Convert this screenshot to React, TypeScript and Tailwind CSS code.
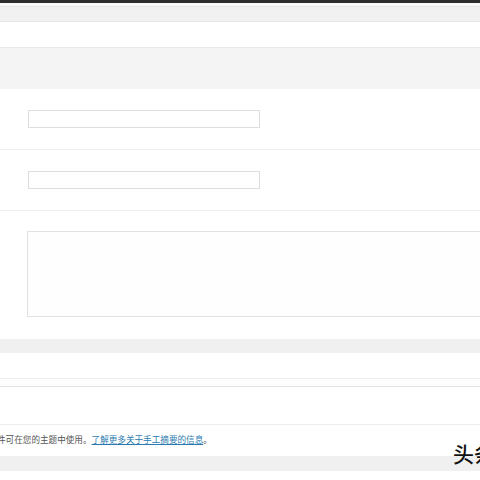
export default function App() {
  return (
    <div className="w-[480px] h-[480px] overflow-hidden bg-white flex flex-col" style={{ fontFamily: '"Liberation Sans", "Noto Sans CJK SC", sans-serif' }}>
      {/* top bar */}
      <div className="h-[3px] bg-[#2e2e2e] shrink-0" />
      <div className="h-[4px] bg-[#fafafa] border-b border-[#e8e8e8] shrink-0" />
      <div className="h-[15px] bg-[#f1f1f1] border-b border-[#e6e6e6] shrink-0" />
      <div className="h-[26px] bg-white border-b border-[#e9e9e9] shrink-0" />
      <div className="h-[41px] bg-[#f4f4f4] shrink-0" />

      {/* field rows */}
      <div className="h-[61px] border-b border-[#efefef] flex items-center pl-[28px] shrink-0">
        <div className="w-[232px] h-[18px] border border-[#dedede] bg-white" />
      </div>
      <div className="h-[61px] border-b border-[#efefef] flex items-center pl-[28px] shrink-0">
        <div className="w-[232px] h-[18px] border border-[#dedede] bg-white" />
      </div>
      <div className="h-[128px] pt-[20px] pl-[27px] shrink-0">
        <div className="w-[470px] h-[86px] border border-[#e2e2e2] bg-[#fefefe]" />
      </div>

      <div className="h-[14px] bg-[#f0f0f0] shrink-0" />
      <div className="h-[26px] bg-white border-b border-[#ececec] shrink-0" />
      <div className="h-[8px] bg-white border-b border-[#e4e4e4] shrink-0" />
      <div className="h-[38px] bg-white border-b border-[#ececec] shrink-0" />

      {/* help text */}
      <div className="relative h-[31px] flex items-center shrink-0">
        <p className="-ml-[3px] text-[8.6px] leading-none text-[#555] whitespace-nowrap">
          件可在您的主题中使用。
          <a href="#" className="text-[#2a7ab0] underline">了解更多关于手工摘要的信息</a>
          。
        </p>
        <span className="absolute left-[453px] top-[18px] text-[21px] font-medium leading-none text-[#111] whitespace-nowrap z-10" style={{ fontFamily: '"Noto Sans CJK SC", sans-serif' }}>
          头条
        </span>
      </div>
      <div className="h-[15px] bg-[#f0f0f0] shrink-0" />
      <div className="flex-1 bg-white" />
    </div>
  );
}
